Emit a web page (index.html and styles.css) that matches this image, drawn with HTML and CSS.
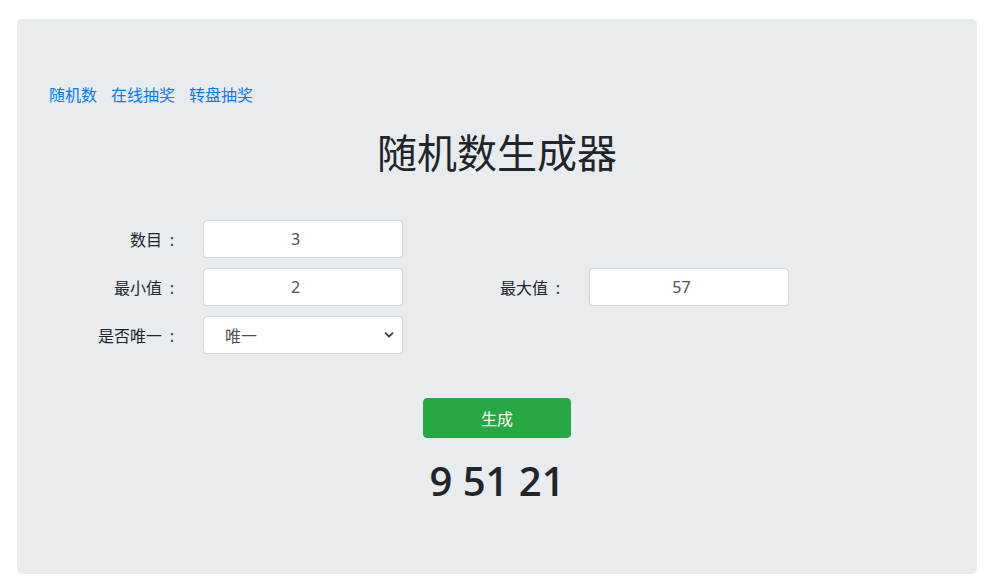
FILE: index.html
```html
<!DOCTYPE html>
<html lang="zh-CN">
<head>
<meta charset="utf-8">
<title>随机数生成器</title>
<link rel="stylesheet" href="styles.css">
</head>
<body>
<div class="jumbotron">
  <nav class="links">
    <a href="#">随机数</a>
    <a href="#">在线抽奖</a>
    <a href="#">转盘抽奖</a>
  </nav>
  <h1 class="title">随机数生成器</h1>
  <form class="form">
    <label class="label">数目<span class="colon">:</span></label>
    <input class="field" type="text" value="3">
    <span></span><span></span>
    <label class="label">最小值<span class="colon">:</span></label>
    <input class="field" type="text" value="2">
    <label class="label">最大值<span class="colon">:</span></label>
    <input class="field" type="text" value="57">
    <label class="label">是否唯一<span class="colon">:</span></label>
    <div class="select">
      <span>唯一</span>
      <svg class="chev" width="10" height="8" viewBox="0 0 10 8"><path d="M1.5 2.2 L5 5.6 L8.5 2.2" fill="none" stroke="#343a40" stroke-width="1.8" stroke-linecap="round" stroke-linejoin="round"/></svg>
    </div>
  </form>
  <div class="actions">
    <button class="btn" type="button">生成</button>
    <div class="result">9 51 21</div>
  </div>
</div>
</body>
</html>
```

FILE: styles.css
```css
html, body {
  margin: 0;
  padding: 0;
  background: #ffffff;
}
body {
  font-family: "Noto Sans", "Noto Sans CJK SC", sans-serif;
  font-size: 16px;
  line-height: 1.5;
  color: #212529;
  padding: 19px 11px 10px 17px;
}
.jumbotron {
  background: #e9ecef;
  border-radius: 5px;
  padding: 63px 32px 70px 32px;
  height: 555px;
  box-sizing: border-box;
}
.links {
  display: flex;
  gap: 14px;
  height: 24px;
}
.links a {
  color: #007bff;
  text-decoration: none;
  font-family: "Noto Sans CJK SC", sans-serif;
}
.title {
  margin: 21px 0 0 0;
  text-align: center;
  font-family: "Noto Sans CJK SC", sans-serif;
  font-weight: 400;
  font-size: 40px;
  line-height: 48px;
  height: 48px;
  color: #212529;
}
.form {
  margin-top: 45px;
  display: grid;
  grid-template-columns: 154px 200px 186px 200px;
  grid-auto-rows: 38px;
  row-gap: 10px;
}
.label {
  text-align: right;
  padding-right: 25px;
  font-family: "Noto Sans CJK SC", sans-serif;
  line-height: 38px;
  color: #212529;
}
.colon {
  display: inline-block;
  width: 16px;
  box-sizing: border-box;
  padding-left: 4px;
  text-align: center;
  font-family: "Noto Sans", sans-serif;
}
.field {
  box-sizing: border-box;
  width: 200px;
  height: 38px;
  border: 1px solid #ced4da;
  border-radius: 4px;
  background: #fff;
  color: #495057;
  font-family: "Noto Sans", sans-serif;
  font-size: 16px;
  text-align: center;
  padding: 0 27px 0 12px;
  outline: none;
}
.select {
  box-sizing: border-box;
  width: 200px;
  height: 38px;
  border: 1px solid #ced4da;
  border-radius: 4px;
  background: #fff;
  color: #495057;
  display: flex;
  align-items: center;
  justify-content: space-between;
  padding: 0 8px 0 21px;
  font-family: "Noto Sans CJK SC", sans-serif;
  font-size: 16px;
}
.actions {
  margin-top: 44px;
  display: flex;
  flex-direction: column;
  align-items: center;
}
.btn {
  width: 148px;
  height: 40px;
  background: #28a745;
  border: 1px solid #28a745;
  border-radius: 4px;
  color: #fff;
  font-family: "Noto Sans CJK SC", sans-serif;
  font-size: 16px;
  padding: 0;
}
.result {
  margin-top: 19px;
  font-family: "Open Sans", "Noto Sans", sans-serif;
  font-weight: 600;
  font-size: 40px;
  line-height: 48px;
  color: #212529;
}
```
